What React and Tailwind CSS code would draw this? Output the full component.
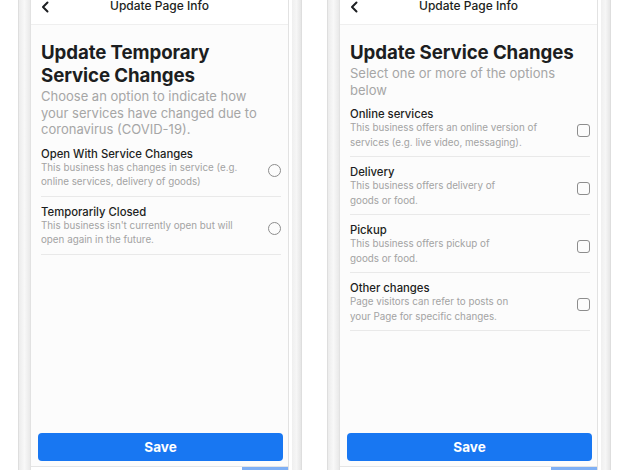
import React from "react";

const leftItems = [
  {
    title: "Open With Service Changes",
    lines: ["This business has changes in service (e.g.", "online services, delivery of goods)"],
  },
  {
    title: "Temporarily Closed",
    lines: ["This business isn't currently open but will", "open again in the future."],
  },
];

const rightItems = [
  {
    title: "Online services",
    lines: ["This business offers an online version of", "services (e.g. live video, messaging)."],
  },
  { title: "Delivery", lines: ["This business offers delivery of", "goods or food."] },
  { title: "Pickup", lines: ["This business offers pickup of", "goods or food."] },
  {
    title: "Other changes",
    lines: ["Page visitors can refer to posts on", "your Page for specific changes."],
  },
];

const Option = ({ item, type }) => (
  <div className="flex items-center border-b border-[#e9e9e9] pt-[9px] pb-[6px]">
    <div className="flex-1">
      <div className="text-[11.3px] leading-[13px] font-medium text-[#1c1e21]">{item.title}</div>
      <div className="text-[9.8px] leading-[14.5px] text-[#a3a3a3]">
        {item.lines[0]}
        <br />
        {item.lines[1]}
      </div>
    </div>
    {type === "radio" ? (
      <div className="w-[13px] h-[13px] rounded-full border-[1.5px] border-[#8d8d8d] mt-[3px]"></div>
    ) : (
      <div className="w-[13px] h-[13px] rounded-[3px] border-[1.5px] border-[#8d8d8d] mt-[3px]"></div>
    )}
  </div>
);

const Phone = ({ title, subtitle, items, type, className }) => (
  <div className={"flex h-full w-[285px] " + className}>
    {/* left bezel */}
    <div className="w-[12px] h-full border-l border-[#dedede] bg-gradient-to-r from-[#ececec] via-[#f8f8f8] to-[#e9e9e9]"></div>

    {/* screen */}
    <div className="w-[259px] h-full flex flex-col border-x border-[#e2e2e2] bg-[#fcfcfc]">
      <div className="h-[25px] bg-white border-b border-[#efefef] flex items-start relative">
        <svg className="absolute left-[10px] top-[1px]" width="8" height="12" viewBox="0 0 8 12">
          <polyline points="6.5,1.5 2,6 6.5,10.5" fill="none" stroke="#1c1e21" strokeWidth="2" strokeLinecap="round" strokeLinejoin="round" />
        </svg>
        <div className="w-full text-center text-[12px] leading-[12px] font-medium text-[#1c1e21]">
          Update Page Info
        </div>
      </div>

      <div className="flex-1 pl-[10px] pr-[7px] pt-[16px]">
        <h1 className="text-[18.7px] leading-[23px] font-bold text-[#1c1e21] tracking-[-0.1px]">{title}</h1>
        <p className="text-[13px] leading-[16.5px] text-[#a6a6a6] mt-[1px] mb-[1px]">{subtitle}</p>
        {items.map((item) => (
          <Option key={item.title} item={item} type={type} />
        ))}
      </div>

      <div className="pl-[7px] pr-[5px] pb-[5px]">
        <button className="w-full h-[28px] rounded-[4px] bg-[#1877f2] text-white text-[13.5px] font-bold">
          Save
        </button>
      </div>
      <div className="h-[4px] border-t border-[#e5e5e5] bg-white flex justify-end">
        <div className="w-[46px] h-full bg-[#7fb0f5]"></div>
      </div>
    </div>

    {/* right bezel */}
    <div className="w-[3px] h-full bg-white"></div>
    <div className="w-[10px] h-full border-r border-[#dedede] bg-gradient-to-r from-[#efefef] via-[#f6f6f6] to-[#e6e6e6]"></div>
  </div>
);

export default function App() {
  return (
    <div className="w-[626px] h-[470px] bg-white flex overflow-hidden font-['Inter',_'Liberation_Sans',_sans-serif]">
      <Phone
        className="ml-[18px]"
        title={
          <>
            Update Temporary
            <br />
            Service Changes
          </>
        }
        subtitle={
          <>
            Choose an option to indicate how
            <br />
            your services have changed due to
            <br />
            coronavirus (COVID-19).
          </>
        }
        items={leftItems}
        type="radio"
      />
      <Phone
        className="ml-[24px]"
        title="Update Service Changes"
        subtitle={
          <>
            Select one or more of the options
            <br />
            below
          </>
        }
        items={rightItems}
        type="checkbox"
      />
    </div>
  );
}
